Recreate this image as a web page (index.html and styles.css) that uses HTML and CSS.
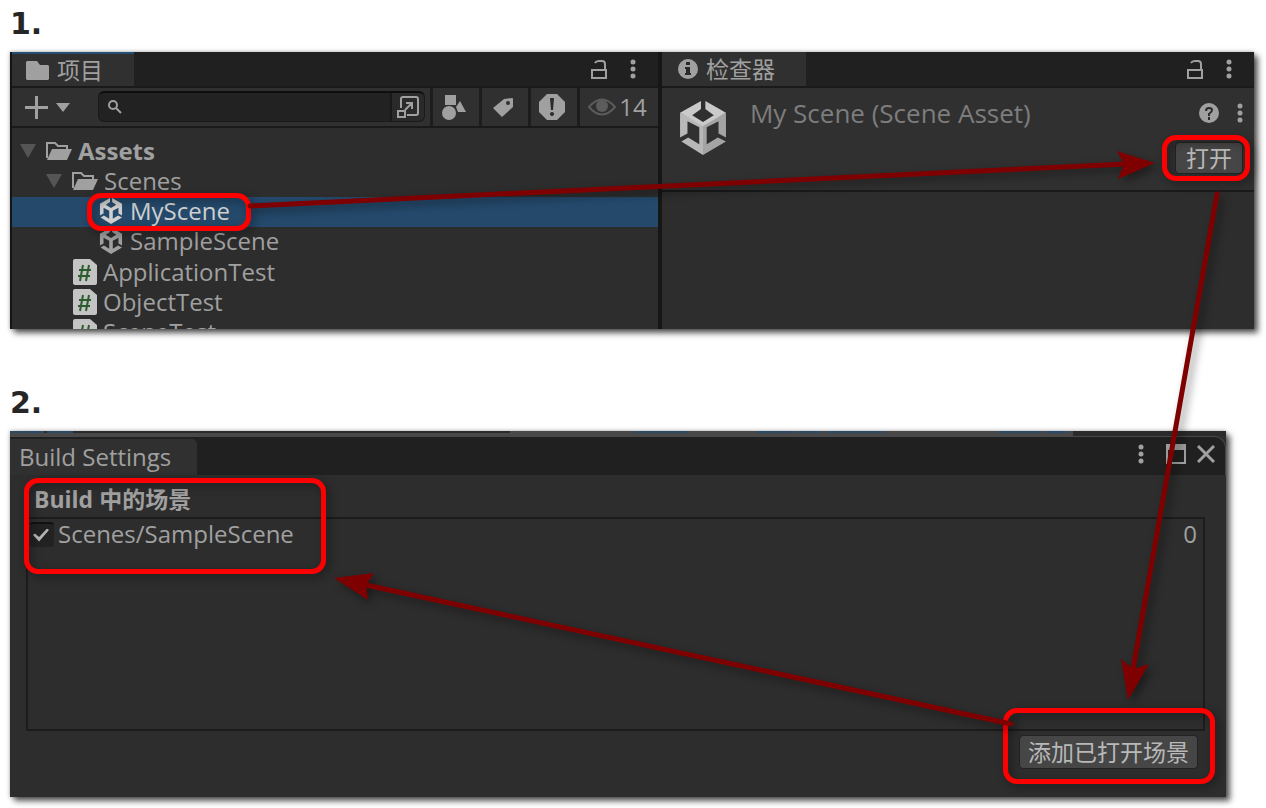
FILE: index.html
```html
<!DOCTYPE html>
<html lang="zh-CN">
<head>
  <meta charset="UTF-8" />
  <meta name="viewport" content="width=device-width, initial-scale=1.0"/>
  <title>Build Settings</title>
  <link rel="stylesheet" href="styles.css">
</head>
<body>

<!-- Shared icons -->
<svg class="sprite" aria-hidden="true">
  <symbol id="i-unity" viewBox="0 0 136 160"><path d="M62 0 0 35v73l22-12V60l35 18v50l-33-20-20 12 64 40 68-40-24-12-33 20V78l35-18v36l22 12V35L75 0v24l25 18-32 20-32-20 26-18z"/></symbol>
  <symbol id="i-folder" viewBox="0 0 26 20"><path d="M1 17V2h8l3 3h9v4" fill="none" stroke="currentColor" stroke-width="2"/><path d="M6 8h20l-5 11H1z"/></symbol>
  <symbol id="i-script" viewBox="0 0 24 26"><path d="M2 0h15l7 6v18a2 2 0 0 1-2 2H2a2 2 0 0 1-2-2V2a2 2 0 0 1 2-2z" fill="#c4c4c4"/><path d="M10 6 7 22M16 6l-3 16M6 11h12M5 17h12" fill="none" stroke="#2a5c2e" stroke-width="2"/></symbol>
  <symbol id="i-lock" viewBox="0 0 16 20"><path d="M1 11h14v8H1zM14 11V5q0-3-3-3H8Q5 2 4 4" fill="none" stroke="currentColor" stroke-width="2"/></symbol>
  <symbol id="i-dots" viewBox="0 0 6 20"><circle cx="3" cy="3" r="2.5"/><circle cx="3" cy="10" r="2.5"/><circle cx="3" cy="17" r="2.5"/></symbol>
</svg>

<main class="page">
  <h2>1.</h2>
  <div class="window editor">
    <section class="project">
      <div class="tabbar">
        <button class="tab active"><svg width="23" height="19" viewBox="0 0 23 19"><path d="M1 0h10l3 4h8l1 1v13l-1 1H1l-1-1V1z"/></svg>项目</button>
        <div class="tab-tools">
          <button aria-label="Lock"><svg width="16" height="20"><use href="#i-lock"/></svg></button>
          <button aria-label="Menu"><svg width="6" height="20"><use href="#i-dots"/></svg></button>
        </div>
      </div>
      <div class="toolbar">
        <button class="add" aria-label="Create">
          <svg width="23" height="23" viewBox="0 0 23 23"><path d="M10 0h3v10h10v3H13v10h-3V13H0v-3h10z"/></svg>
          <svg width="14" height="9" viewBox="0 0 14 9"><path d="M0 0h14L7 9z"/></svg>
        </button>
        <div class="search">
          <svg width="14" height="14" viewBox="0 0 14 14"><circle cx="5" cy="5" r="4" fill="none" stroke="currentColor" stroke-width="2"/><path d="m8 8 5 5" stroke="currentColor" stroke-width="2"/></svg>
          <input type="text" aria-label="Search">
          <button aria-label="Open search window"><svg width="24" height="24" viewBox="0 0 24 24"><path d="M5 13V4q0-2 2-2h13q2 0 2 2v14q0 2-2 2h-9M2 16h7v6H2zM9 15l7-7M10 8h6v6" fill="none" stroke="currentColor" stroke-width="2"/></svg></button>
        </div>
        <button class="tool" aria-label="Search by type"><svg width="24" height="26" viewBox="0 0 24 26"><path d="M3 1h11v10H3zM18 7l6 11h-8l-2-5z"/><circle cx="7" cy="19" r="7"/></svg></button>
        <button class="tool" aria-label="Search by label"><svg width="20" height="19" viewBox="0 0 20 19"><path fill-rule="evenodd" d="M11 1 19 0q1 0 1 1v8l-11 10-9-9zM15 3a2 2 0 1 0 0 4 2 2 0 0 0 0-4z"/></svg></button>
        <button class="tool" aria-label="Search by log type"><svg width="26" height="26" viewBox="0 0 26 26"><path d="M8 0h10l8 8v10l-8 8H8l-8-8V8z"/><path d="M11 4h4l-1 12h-2z" fill="#2a2a2a"/><circle cx="13" cy="20" r="2" fill="#2a2a2a"/></svg></button>
        <button class="tool hidden-count"><svg width="28" height="18" viewBox="0 0 28 18"><path d="M1 9Q14-6 27 9 14 24 1 9z" fill="none" stroke="currentColor" stroke-width="2"/><circle cx="14" cy="8" r="6"/></svg>14</button>
      </div>
      <ul class="tree">
        <li class="root"><i class="fold"></i><svg width="26" height="20"><use href="#i-folder"/></svg>Assets</li>
        <li class="level-1"><i class="fold"></i><svg width="26" height="20"><use href="#i-folder"/></svg>Scenes</li>
        <li class="level-2 selected"><span class="item marked"><svg width="26" height="26"><use href="#i-unity"/></svg>MyScene</span></li>
        <li class="level-2"><svg width="26" height="26"><use href="#i-unity"/></svg>SampleScene</li>
        <li class="level-1 file"><svg width="24" height="26"><use href="#i-script"/></svg>ApplicationTest</li>
        <li class="level-1 file"><svg width="24" height="26"><use href="#i-script"/></svg>ObjectTest</li>
        <li class="level-1 file"><svg width="24" height="26"><use href="#i-script"/></svg>SceneTest</li>
      </ul>
    </section>

    <section class="inspector">
      <div class="tabbar">
        <button class="tab"><svg width="20" height="20" viewBox="0 0 20 20"><circle cx="10" cy="10" r="10"/><path d="M8 3h4v3H8zM7 8h5v6h1v2H7v-2h1v-4H7z" fill="#2a2a2a"/></svg>检查器</button>
        <div class="tab-tools">
          <button aria-label="Lock"><svg width="16" height="20"><use href="#i-lock"/></svg></button>
          <button aria-label="Menu"><svg width="6" height="20"><use href="#i-dots"/></svg></button>
        </div>
      </div>
      <div class="asset">
        <svg width="46" height="54" viewBox="0 0 136 160">
          <path d="M0 35v73l22-12V60l35 18v50l-33-20-20 12 64 40V70z" fill="#b8b8b8"/>
          <path d="M136 35v73l-22-12V60L79 78v50l33-20 24 12-68 40V70z" fill="#a4a4a4"/>
          <path d="M62 0 0 35l68 39 68-39L75 0v24l25 18-32 20-32-20 26-18z" fill="#cacaca"/>
        </svg>
        <h3>My Scene (Scene Asset)</h3>
        <div class="asset-side">
          <div class="asset-tools">
            <button aria-label="Help"><svg width="20" height="20" viewBox="0 0 20 20"><circle cx="10" cy="10" r="10"/><path d="M7 8q0-3 3-3t3 2-3 4v2" fill="none" stroke="#2a2a2a" stroke-width="2"/><path d="M9 14h2v3H9z" fill="#2a2a2a"/></svg></button>
            <button aria-label="More"><svg width="6" height="20"><use href="#i-dots"/></svg></button>
          </div>
          <span class="open marked"><button class="btn">打开</button></span>
        </div>
      </div>
    </section>
  </div>

  <h2>2.</h2>
  <div class="window build">
    <svg class="edge" viewBox="0 0 1216 5" preserveAspectRatio="none" aria-hidden="true">
      <path d="M0 0h1216v5H0z" fill="#484848"/>
      <path d="M0 0h500v2H0zM1063 0h153v5h-153z" fill="#2b2b2b"/>
      <path d="M0 0h34v2H0zM37 0h26v2H37zM624 0h54v2h-54zM746 0h38v2h-38zM787 0h24v2h-24zM817 0h56v2h-56zM988 0h42v2h-42zM1033 0h26v2h-26z" fill="#2c4a66"/>
    </svg>
    <div class="tabbar">
      <button class="tab">Build Settings</button>
      <div class="tab-tools">
        <button class="menu" aria-label="Menu"><svg width="6" height="20"><use href="#i-dots"/></svg></button>
        <button aria-label="Maximize"><svg width="20" height="20" viewBox="0 0 20 20"><path d="M1 1h18v18H1z" fill="none" stroke="currentColor" stroke-width="2"/><path d="M0 0h20v6H0z"/></svg></button>
        <button aria-label="Close"><svg width="18" height="18" viewBox="0 0 18 18"><path d="m1 1 16 16M17 1 1 17" stroke="currentColor" stroke-width="3"/></svg></button>
      </div>
    </div>
    <div class="build-body">
      <div class="scenes-head marked">Build 中的场景</div>
      <div class="scene-list">
        <label class="scene-row"><input type="checkbox" checked>Scenes/SampleScene<span>0</span></label>
      </div>
      <div class="actions"><span class="add-open marked"><button class="btn">添加已打开场景</button></span></div>
    </div>
  </div>

  <!-- Arrows between the steps -->
  <svg class="arrows" viewBox="0 0 1266 808" preserveAspectRatio="none" aria-hidden="true">
    <path class="line" d="M250 206 1126 164M1217 194 1133 669M1011 724 366 585"/>
    <path d="m1155 163-38-12 7 13-6 15zM1128 700l-7-41 12 10 16-5zM334 578l40-5-8 12 2 15z"/>
  </svg>
</main>

</body>
</html>
```
FILE: styles.css
```css
*, *::before, *::after {
  box-sizing: border-box;
}
body {
  margin: 0;
  background: #fff;
  color: #a0a0a0;
  font-family: "Open Sans", "Noto Sans CJK SC", sans-serif;
  font-size: 24px;
  line-height: 30px;
}
svg {
  fill: currentColor;
  flex: none;
}
button {
  display: flex;
  align-items: center;
  padding: 0;
  border: none;
  background: none;
  color: inherit;
  font: inherit;
  white-space: nowrap;
}
.sprite {
  position: absolute;
  width: 0;
  height: 0;
}
.page {
  position: relative;
  padding: 4px 12px 11px 10px;
}
h2 {
  margin: 0;
  padding-bottom: 8px;
  color: #262626;
  font: bold 30px/40px "DejaVu Sans", sans-serif;
}
.window {
  background: #2d2d2d;
  box-shadow: 4px 4px 6px rgba(0,0,0,0.65), 0 0 4px rgba(0,0,0,0.3);
}

/* Tabs */
.tabbar {
  display: flex;
  justify-content: space-between;
  height: 36px;
  background: #202020;
  border-bottom: 2px solid #1a1a1a;
}
.tab {
  gap: 8px;
  padding: 0 31px 0 14px;
  background: #303030;
  font-size: 23px;
}
.tab.active {
  border-top: 2px solid #244d72;
}
.inspector .tab {
  padding-left: 16px;
}
.tab-tools {
  display: flex;
  align-items: center;
  gap: 23px;
  padding-right: 22px;
}

/* Step 1 */
.editor {
  display: flex;
  margin-bottom: 54px;
}
.project {
  flex: 12;
  min-width: 0;
  border-left: 2px solid #141414;
}
.inspector {
  flex: 11;
  min-width: 0;
  border-left: 4px solid #161616;
}
.toolbar {
  display: flex;
  height: 40px;
  background: #303030;
  border-bottom: 2px solid #1a1a1a;
}
.add {
  gap: 8px;
  padding: 0 28px 0 13px;
}
.search {
  display: flex;
  flex: 1;
  align-items: center;
  min-width: 0;
  height: 31px;
  margin: 3px 5px 0 0;
  padding-left: 9px;
  border: 1px solid #1a1a1a;
  border-top: 2px solid #0e0e0e;
  border-radius: 6px;
  background: #222;
}
.search input {
  flex: 1;
  min-width: 0;
  height: 26px;
  padding: 0 8px;
  border: none;
  background: none;
  color: inherit;
  font: inherit;
}
.search button {
  align-self: stretch;
  padding: 0 4px;
  border-left: 2px solid #191919;
  background: #2a2a2a;
  border-radius: 0 6px 6px 0;
}
.tool {
  justify-content: center;
  width: 49px;
  padding-right: 3px;
  border-left: 3px solid #1d1d1d;
}
.hidden-count {
  gap: 3px;
  width: 81px;
}
.hidden-count svg {
  color: #5c5c5c;
}
.tree {
  max-height: 201px;
  margin: 0;
  padding: 9px 0 0;
  overflow: hidden;
  list-style: none;
}
.tree li, .item {
  display: flex;
  align-items: center;
  gap: 6px;
  height: 30px;
}
.tree li {
  padding: 0 0 2px 8px;
}
.tree .root {
  font-weight: bold;
}
.tree .level-1 {
  padding-left: 34px;
}
.tree .level-2 {
  padding-left: 86px;
}
.tree .file {
  padding-left: 61px;
  padding-bottom: 0;
}
.tree .selected {
  background: #24496b;
  color: #d0d0d0;
}
.fold {
  width: 16px;
  height: 14px;
  margin-right: 4px;
  background: #555;
  clip-path: polygon(0 0, 100% 0, 50% 100%);
}
.asset {
  display: flex;
  height: 104px;
  padding: 13px 11px 0 18px;
  background: #303030;
  border-bottom: 2px solid #1a1a1a;
}
.asset h3 {
  flex: 1;
  margin: 0 0 0 24px;
  color: #7d7d7d;
  font-size: 26px;
  font-weight: normal;
  line-height: 24px;
  white-space: nowrap;
}
.asset-side {
  display: flex;
  flex-direction: column;
  align-items: flex-end;
  gap: 19px;
  padding-top: 2px;
}
.asset-tools {
  display: flex;
  gap: 18px;
}
.btn {
  height: 32px;
  padding: 0 10px;
  border: 1px solid #222;
  border-radius: 4px;
  background: #464646;
  color: #b8b8b8;
  font-size: 23px;
}

/* Step 2 */
.build {
  margin-right: 28px;
}
.edge {
  display: block;
  width: 100%;
  height: 5px;
}
.build .tabbar {
  height: 39px;
  padding-top: 2px;
  border-top: 1px solid #484848;
  border-right: 1px solid #484848;
  border-bottom: none;
  border-radius: 0 12px 0 0;
}
.build .tab {
  padding: 0 26px 0 9px;
  border-radius: 0 5px 0 0;
  font-size: 24px;
}
.build .tab-tools {
  gap: 11px;
  padding: 0 10px 6px 0;
}
.build .menu {
  margin-right: 11px;
}
.build-body {
  padding: 9px 21px 27px 16px;
}
.scenes-head {
  padding-left: 8px;
  font-size: 23px;
  font-weight: bold;
}
.scene-list {
  height: 214px;
  margin-top: 3px;
  padding: 0 6px 0 2px;
  border: 2px solid #1c1c1c;
}
.scene-row {
  display: flex;
  align-items: center;
  gap: 4px;
}
.scene-row span {
  margin-left: auto;
}
.scene-row input {
  width: 24px;
  height: 25px;
  margin: 0;
  border-top: 2px solid #111;
  border-radius: 3px;
  background: #222;
  appearance: none;
}
.scene-row input:checked::before {
  content: "";
  display: block;
  width: 16px;
  height: 13px;
  margin: 5px 3px;
  background: #b4b4b4;
  clip-path: polygon(0 50%, 12% 38%, 38% 66%, 88% 0, 100% 12%, 38% 100%);
}
.actions {
  display: flex;
  justify-content: flex-end;
  padding: 4px 7px 1px 0;
}
.actions .btn {
  height: 34px;
  padding: 0 8px;
}

/* Red boxes around the things to click */
.marked {
  position: relative;
}
.marked::after {
  content: "";
  position: absolute;
  z-index: 1;
  border: 5px solid #fe0000;
  border-radius: 14px;
  filter: drop-shadow(3px 3px 4px rgba(0,0,0,0.4));
  pointer-events: none;
}
.item.marked::after {
  inset: -3px -21px -5px -11px;
}
.open.marked::after {
  inset: -7px -7px -7px -13px;
}
.scenes-head.marked::after {
  top: -6px;
  left: -2px;
  width: 302px;
  height: 96px;
}
.add-open.marked::after {
  inset: -27px -17px -15px -16px;
}

.arrows {
  position: absolute;
  z-index: 2;
  top: 0;
  left: 0;
  width: 100%;
  height: 100%;
  fill: #7f0000;
  filter: drop-shadow(4px 4px 4px rgba(0,0,0,0.4));
  pointer-events: none;
}
.arrows .line {
  fill: none;
  stroke: #7f0000;
  stroke-width: 5;
  stroke-linecap: round;
}
```
